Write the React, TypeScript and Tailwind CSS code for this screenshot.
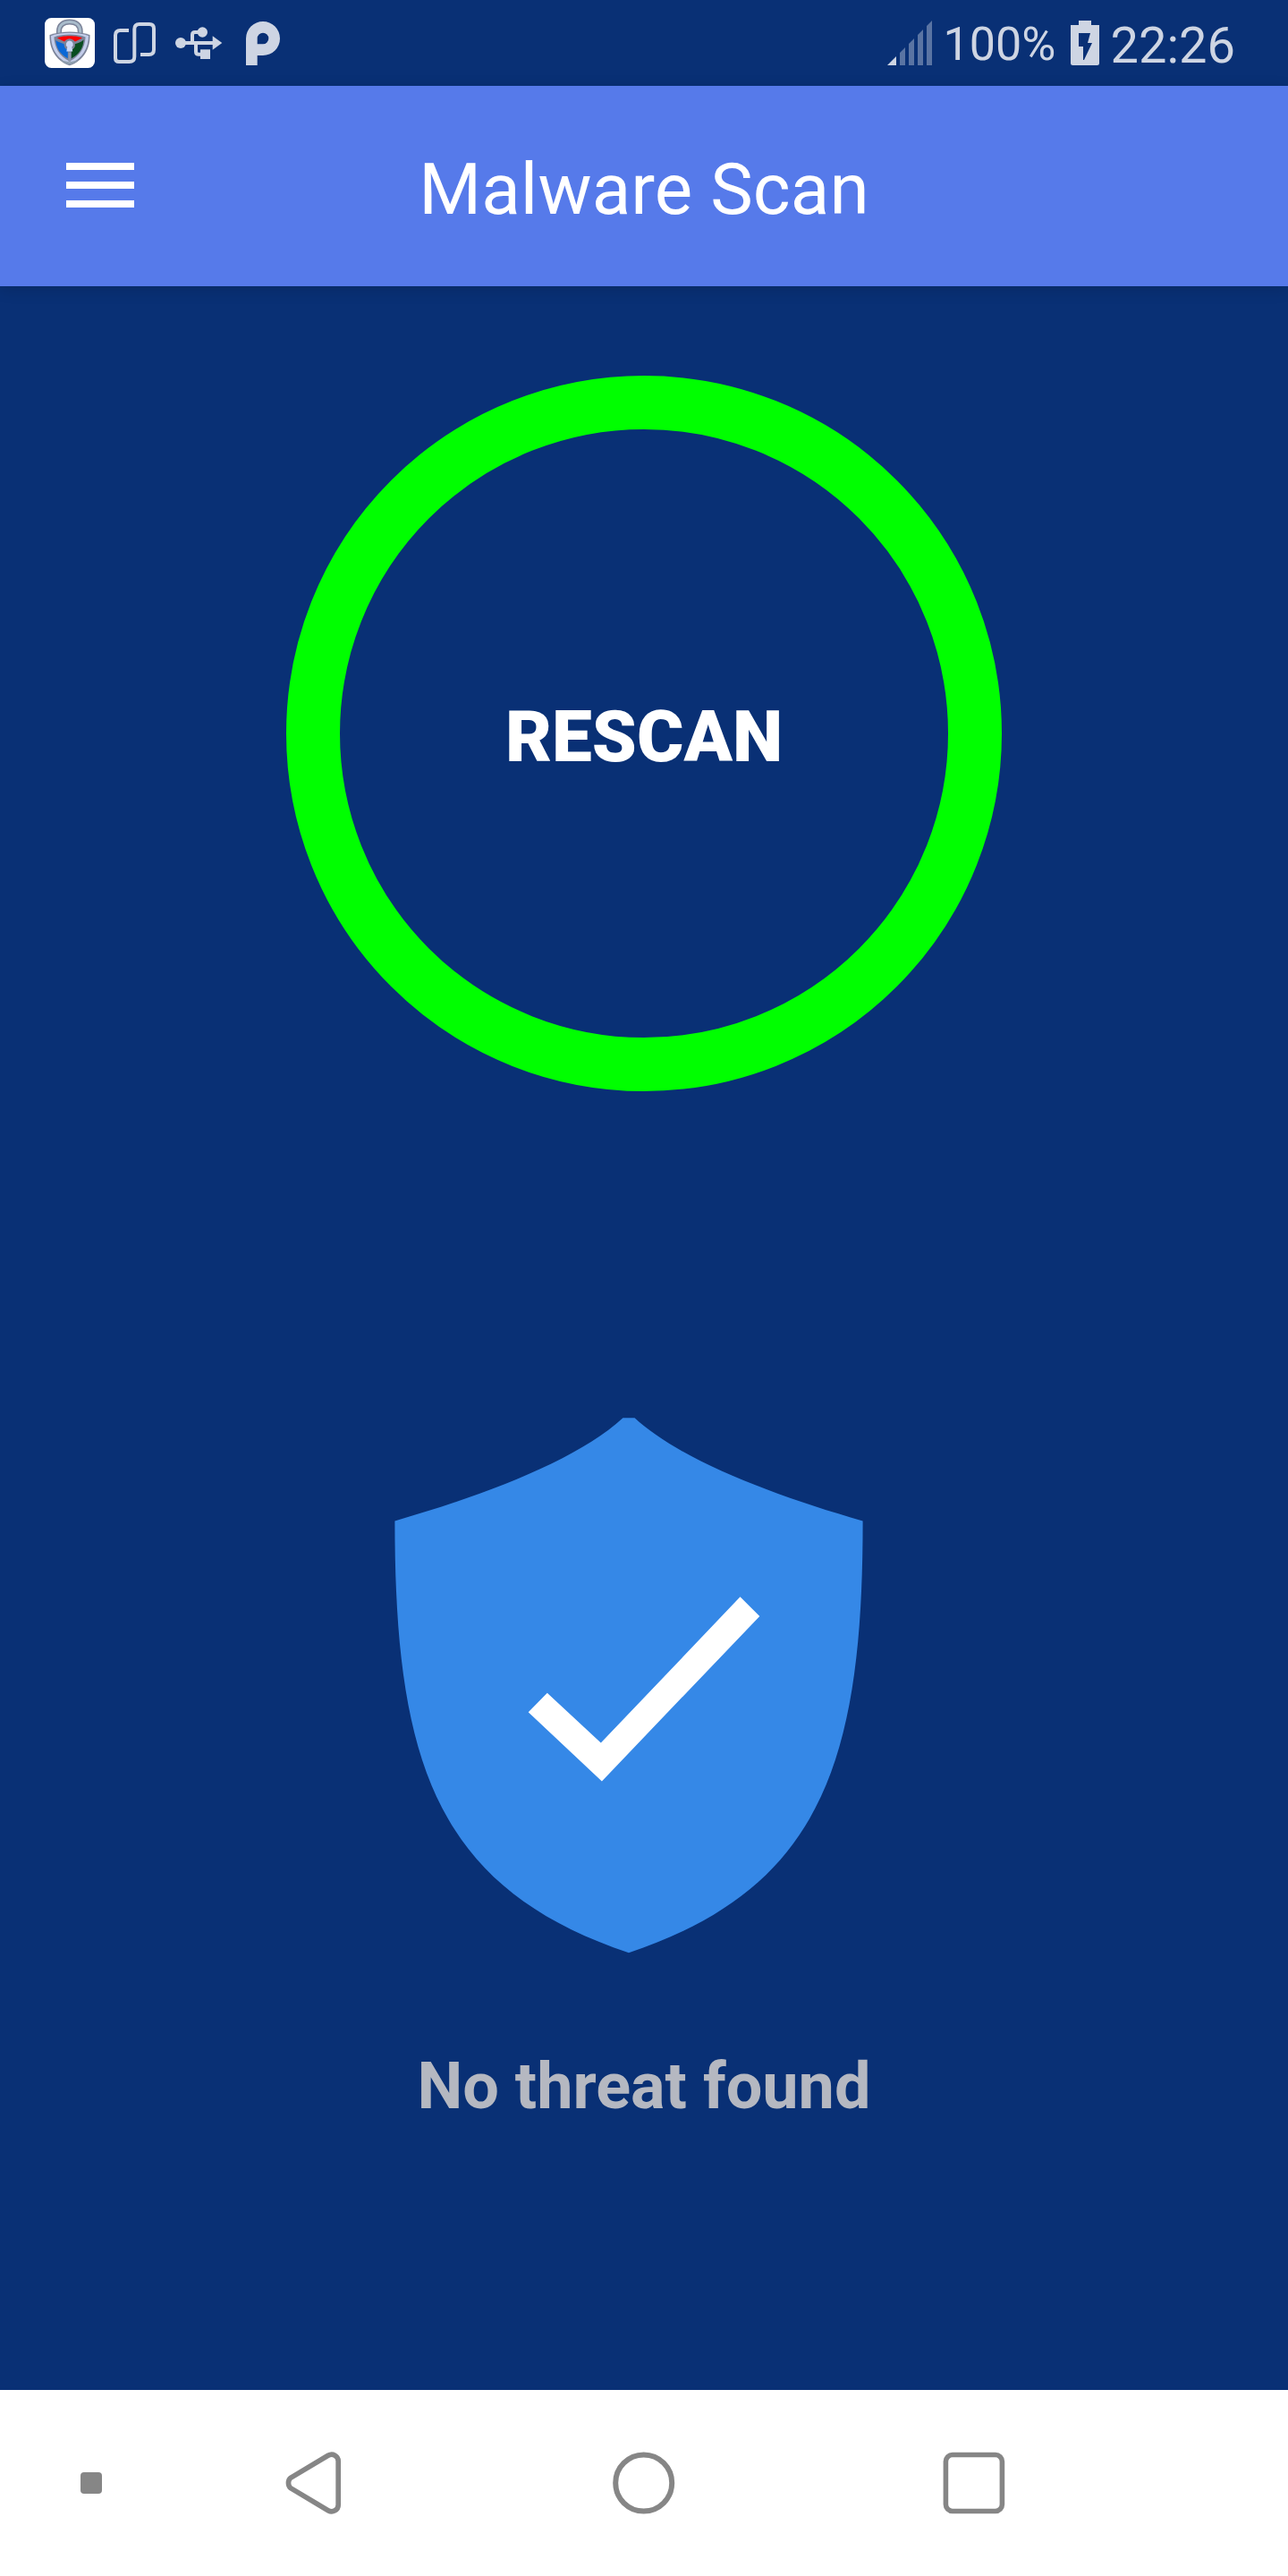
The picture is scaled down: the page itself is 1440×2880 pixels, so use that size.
import React from "react";

function AppLogo() {
  return (
    <svg className="block" width="56" height="56" viewBox="0 0 56 56" fill="none">
      <rect width="56" height="56" rx="7.5" fill="#fff" />
      <path d="M16 19V15C16 8 21 4.6 27.8 4.6S39.7 8 39.7 15V19" stroke="#7b8399" strokeWidth="6" />
      <path d="M16 18V15C16 8 21 4.6 27.8 4.6S39.7 8 39.7 15V18" stroke="#a9bccb" strokeWidth="3" />
      <path
        d="M28 15.5C21 15.5 12 17 5.5 19C5 34 12 48 27.8 53.3C43.5 48 51 34 50.5 19C44 17 35 15.5 28 15.5Z"
        fill="#7b8399"
      />
      <path
        d="M28 16.8C21 16.8 13 18 7 20C7 33 13 46 27.8 51.5C42.5 46 49 33 49 20C43 18 35 16.8 28 16.8Z"
        fill="#c3cdea"
      />
      <path
        d="M28 18.6C22 18.6 15.5 19.6 10.4 21.4C11 32.5 16 43 27.8 48.5C39.5 43 44.9 32.5 45.6 21.4C40.5 19.6 34 18.6 28 18.6Z"
        fill="#7b8399"
      />
      <path d="M14 22.4C19 19.4 37 19.4 42 22.4L34 26.6C30 23 26 23 22 26.6Z" fill="#f00" />
      <path d="M12.3 25C15 27 19 28.5 22.3 29.3C21 33 24 35 25.8 36V45.3C17.5 41 13 34 12.3 25Z" fill="#0b68d6" />
      <path d="M43.5 24.5C41 27 37 28.5 33.3 29.3C34.5 33 32 35 29.8 36V45.3C38.5 41 43 34 43.5 24.5Z" fill="#084d20" />
      <circle cx="27.8" cy="29.5" r="6.2" fill="#7b8399" />
      <path d="M27.8 25.5A4 4 0 0 0 25.3 32.6L24.3 37.5H31.3L30.3 32.6A4 4 0 0 0 27.8 25.5Z" fill="#c9d5f5" />
      <path d="M27.8 39V49" stroke="#8e99ad" strokeWidth="2.6" />
      <path d="M17 47C20 49.5 24 51.4 27.8 52.3C31.6 51.4 35 49.5 38 47L27.8 49.5Z" fill="#8d9eae" />
    </svg>
  );
}

function RotateIcon() {
  return (
    <svg className="block" width="48" height="48" viewBox="126 24 48 48" fill="none" stroke="#ced5e3" strokeWidth="4">
      <path d="M144 34H134.5Q129 34 129 39.500V65Q129 69 133 69H144.500Q150.300 69 150.300 63.500V32.500Q150.300 27 155.800 27H167Q172 27 172 32V55.500Q172 61 166.500 61H157" />
    </svg>
  );
}

function UsbIcon() {
  return (
    <svg className="block" width="52" height="38" viewBox="196 30 52 38" fill="none" overflow="visible">
      <g stroke="#ced5e3" strokeWidth="4">
        <path d="M202 48H239" />
        <path d="M215 48V39Q215 36 218 36H226" />
        <path d="M219 48V57.700Q219 60.700 222 60.700H226" />
      </g>
      <g fill="#ced5e3">
        <circle cx="202" cy="48" r="6" />
        <circle cx="226.300" cy="36" r="5.700" />
        <rect x="224" y="55.300" width="11" height="10.700" />
        <path d="M237.700 40.300L248.300 48L237.700 55.700Z" />
      </g>
    </svg>
  );
}

function ParkingIcon() {
  return (
    <svg className="block" width="38" height="49" viewBox="275 24 38 49">
      <path
        fill="#ced5e3"
        fillRule="evenodd"
        d="M275 73V43A19 19 0 1 1 294 62H287.700V73ZM287.700 49.300H294A6.300 6.300 0 1 0 287.700 43Z"
      />
    </svg>
  );
}

function SignalIcon() {
  return (
    <svg className="block" width="50" height="50" viewBox="0 0 50 50">
      <path d="M0 50L10 40V50Z" fill="#ced5e3" />
      <path
        d="M14 50V36L20 30V50ZM24 50V26L30 20V50ZM34 50V16L40 10V50ZM44 50V6L50 0V50Z"
        fill="#5a74a3"
      />
    </svg>
  );
}

function BatteryIcon() {
  return (
    <svg className="block" width="32" height="50" viewBox="1197 23 32 50">
      <path
        fill="#ced5e3"
        fillRule="evenodd"
        d="M1206 23H1220V28H1229V70.500Q1229 73 1226.500 73H1199.500Q1197 73 1197 70.500V28H1206ZM1206 37V52H1211V67H1212L1221 48H1216L1219 37Z"
      />
    </svg>
  );
}

function StatusBar() {
  return (
    <div className="flex h-24 items-start justify-between pl-[50px] pr-[60px] text-[#ced5e3]">
      <div className="flex items-start">
        <div className="mt-5"><AppLogo /></div>
        <div className="mt-6 ml-5"><RotateIcon /></div>
        <div className="mt-[30px] ml-[22px]"><UsbIcon /></div>
        <div className="mt-6 ml-[27px]"><ParkingIcon /></div>
      </div>
      <div className="flex items-start">
        <div className="mt-[23px]"><SignalIcon /></div>
        <span className="mt-[20px] ml-[12.5px] w-[125.5px] text-[52px] leading-[60px] whitespace-nowrap">100%</span>
        <div className="mt-[23px] ml-[17px]"><BatteryIcon /></div>
        <span className="mt-[19px] ml-[12.5px] w-[138.5px] text-[56px] leading-[64px] whitespace-nowrap">22:26</span>
      </div>
    </div>
  );
}

function Header() {
  return (
    <header className="grid h-56 grid-cols-[1fr_auto_1fr] bg-[#567aea] px-[74px] shadow-[0_4px_16px_rgba(0,0,0,0.14)]">
      <button aria-label="Menu" className="mt-[86px] flex w-[76px] flex-col gap-[13px] self-start">
        <span className="h-2 bg-white" />
        <span className="h-2 bg-white" />
        <span className="h-2 bg-white" />
      </button>
      <h1 className="mt-[69px] text-[80px] leading-[94px] tracking-[0.1px] whitespace-nowrap text-white">Malware Scan</h1>
    </header>
  );
}

function ShieldCheck() {
  return (
    <svg className="block" width="526" height="600" viewBox="440 1584 526 600">
      <path
        fill="#3588e7"
        d="M696.4 1585.300H709.600C760 1632 865 1672 964.600 1700.400C964.600 1970 918 2111 703 2183.300C488 2111 441.400 1970 441.400 1700.400C541 1672 646 1632 696.400 1585.300Z"
      />
      <path
        fill="#fff"
        d="M590.700 1914.300L611.800 1892.700L671.800 1948.600L827.500 1785.300L849.300 1806.900L672.900 1991.400Z"
      />
    </svg>
  );
}

function NavBar() {
  return (
    <nav className="flex h-52 items-center bg-white pl-[90px]">
      <span className="size-6 rounded-[4px] bg-[#868686]" />
      <svg className="ml-[205px]" width="64" height="72" viewBox="319 2740 64 72" fill="none">
        <path
          d="M324.800 2770.400L366.800 2745.300C372 2742.300 378.200 2745.800 378.200 2751.500V2800.500C378.200 2806.200 372 2809.700 366.800 2806.700L324.800 2781.600C321.700 2779 321.700 2773 324.800 2770.400Z"
          stroke="#868686"
          strokeWidth="5.700"
          strokeLinejoin="round"
        />
      </svg>
      <svg className="ml-[301px]" width="72" height="72" viewBox="0 0 72 72" fill="none" stroke="#868686" strokeWidth="6">
        <circle cx="35.700" cy="36" r="31.500" />
      </svg>
      <svg className="ml-[297px]" width="72" height="72" viewBox="0 0 72 72" fill="none" stroke="#868686" strokeWidth="5.600">
        <rect x="4.400" y="4.500" width="63" height="63" rx="7.500" />
      </svg>
    </nav>
  );
}

export default function App() {
  return (
    <div className="flex h-[2880px] w-[1440px] flex-col overflow-hidden bg-[#093075] font-['Roboto',sans-serif]">
      <StatusBar />
      <Header />
      <main className="flex flex-1 flex-col items-center">
        <button className="mt-[100px] flex size-[800px] items-center justify-center rounded-full border-60 border-[#00ff00] pt-[8px] text-[80px] leading-[94px] font-black text-white">
          RESCAN
        </button>
        <div className="mt-[364px] mr-[34px]"><ShieldCheck /></div>
        <p className="mt-[107px] text-[72px] leading-[84px] font-bold whitespace-nowrap text-[#b5b8c1]">No threat found</p>
      </main>
      <NavBar />
    </div>
  );
}
